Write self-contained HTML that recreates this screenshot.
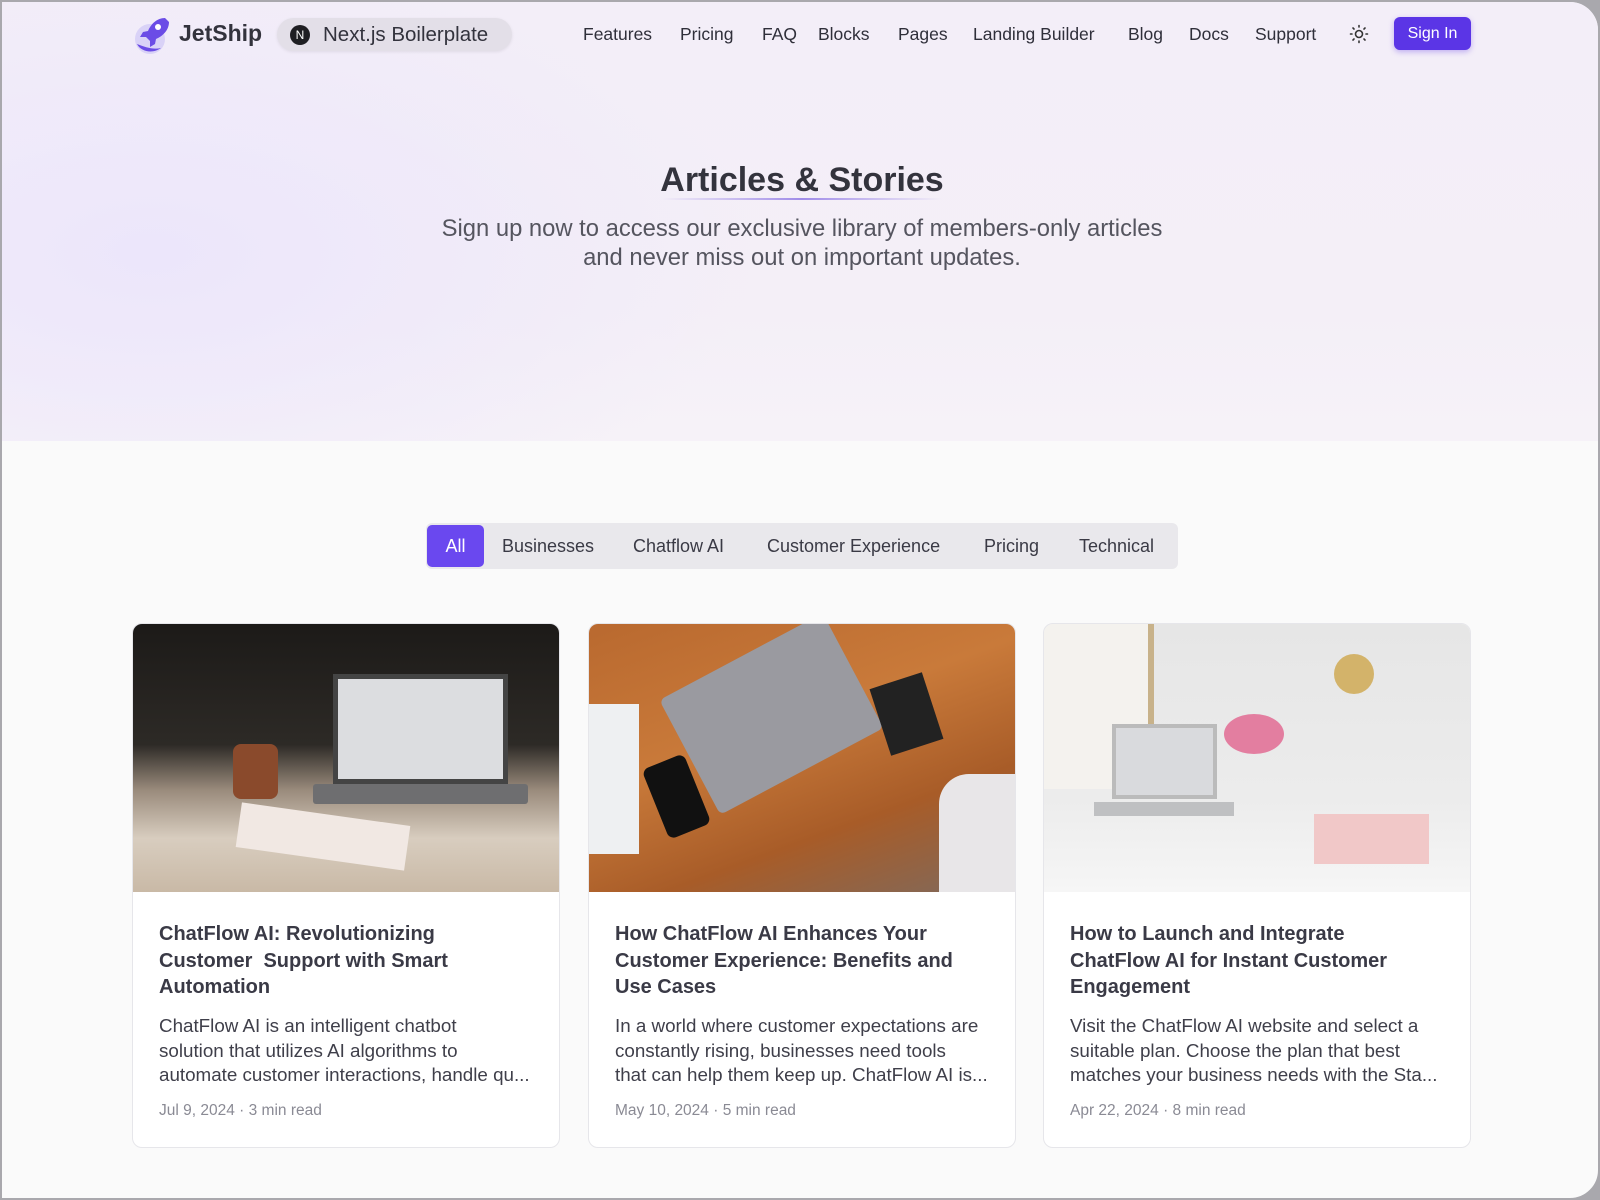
<!DOCTYPE html>
<html><head><meta charset="utf-8"><style>
*{box-sizing:border-box;margin:0;padding:0}
body{width:1600px;height:1200px;overflow:hidden;background:#a9a8ad;font-family:"Liberation Sans",sans-serif;color:#3a3a45}
.frame{position:absolute;left:0;top:0;width:1600px;height:1200px;border:2px solid #a9a8ad;border-radius:0 30px 30px 0;background:#fafafa;overflow:hidden}
.hero{position:absolute;left:0;top:0;width:1600px;height:439px;background:radial-gradient(ellipse 600px 300px at 150px 250px,#ece6fb 0%,rgba(236,230,251,0) 100%),linear-gradient(180deg,#f3eef8 0%,#f4eff7 70%,#f6f2f8 100%)}
.abs{position:absolute;white-space:nowrap}
.nav a{position:absolute;top:22px;font-size:17.5px;color:#2f2f3a}
.pill{left:275px;top:16px;width:235px;height:33px;border-radius:17px;background:#e3dfe8;box-shadow:0 1px 3px rgba(0,0,0,.08)}
.signin{left:1392px;top:15px;width:77px;height:33px;border-radius:6px;background:#5b35e6;color:#fff;font-size:16px;text-align:center;line-height:33px;box-shadow:0 2px 6px rgba(91,53,230,.35)}
.tabs{left:424px;top:521px;width:752px;height:46px;background:#e9e8ec;border-radius:6px}
.tab{position:absolute;top:13px;font-size:18px;color:#3a3a45}
.card{position:absolute;top:621px;width:428px;height:525px;background:#fff;border:1px solid #e6e6ea;border-radius:10px;overflow:hidden}
.img{height:268px;position:relative;overflow:hidden}
.ct{position:absolute;left:26px;top:297px;white-space:nowrap;font-size:20px;font-weight:bold;line-height:26.5px;color:#3a3a46}
.cd{position:absolute;left:26px;top:390px;white-space:nowrap;font-size:18.8px;line-height:24.5px;color:#3f3f4a}
.dt{position:absolute;left:26px;top:478px;font-size:15.5px;color:#8a8a94}
</style></head><body><div class="frame">
<div class="hero"></div>
<svg class="abs" style="left:129px;top:12px" width="42" height="42" viewBox="0 0 42 42"><circle cx="19" cy="25" r="15" fill="#d9d2f7"/><path d="M6 30c4 8 16 10 24 4-8 2-16-1-24-4z" fill="#6b4ce6"/><path d="M34 4c-8 0-14 6-17 13l-5 1-3 5 6 0 4 4 0 6 5-3 1-5c7-3 13-9 13-17z" fill="#6b4ce6"/><circle cx="27" cy="13" r="3" fill="#fff"/></svg>
<div class="abs" style="left:177px;top:18px;font-size:23px;font-weight:bold;color:#33333d">JetShip</div>
<div class="abs pill"></div>
<div class="abs" style="left:288px;top:23px;width:20px;height:20px;border-radius:50%;background:#1e1e22;color:#fff;font-size:12px;text-align:center;line-height:20px">N</div>
<div class="abs" style="left:321px;top:21px;font-size:20.5px;color:#33333d">Next.js Boilerplate</div>
<div class="nav"><a style="left:581px">Features</a><a style="left:678px">Pricing</a><a style="left:760px">FAQ</a><a style="left:816px">Blocks</a><a style="left:896px">Pages</a><a style="left:971px">Landing Builder</a><a style="left:1126px">Blog</a><a style="left:1187px">Docs</a><a style="left:1253px">Support</a></div>
<svg class="abs" style="left:1347px;top:22px" width="20" height="20" viewBox="0 0 20 20" fill="none" stroke="#333" stroke-width="1.6" stroke-linecap="round"><circle cx="10" cy="10" r="3.5"/><path d="M10 1.5v1.5M10 17v1.5M1.5 10h1.5M17 10h1.5M4 4l1 1M15 15l1 1M4 16l1-1M15 5l1-1"/></svg>
<div class="abs signin">Sign In</div>
<div class="abs" style="left:0;width:1600px;top:159px;text-align:center;font-size:34px;font-weight:bold;color:#33333d">Articles &amp; Stories</div>
<div class="abs" style="left:660px;top:196px;width:280px;height:2px;background:linear-gradient(90deg,rgba(139,110,230,0),#a08ce8,rgba(139,110,230,0))"></div>
<div class="abs" style="left:0;width:1600px;top:212px;text-align:center;font-size:23.8px;line-height:29px;color:#55555f">Sign up now to access our exclusive library of members-only articles<br>and never miss out on important updates.</div>
<div class="abs tabs">
<div class="abs" style="left:1px;top:2px;width:57px;height:42px;border-radius:5px;background:#6a48ef;color:#fff;font-size:18px;text-align:center;line-height:42px">All</div>
<span class="tab" style="left:76px">Businesses</span><span class="tab" style="left:207px">Chatflow AI</span><span class="tab" style="left:341px">Customer Experience</span><span class="tab" style="left:558px">Pricing</span><span class="tab" style="left:653px">Technical</span>
</div>
<div class="card" style="left:130px"><div class="img" style="background:linear-gradient(180deg,#1c1a18 0%,#2d2a26 45%,#9a8b7c 62%,#d8cdbf 80%,#c9b9a6 100%)">
<div class="abs" style="left:200px;top:50px;width:175px;height:110px;background:#dcdde0;border:5px solid #444"></div>
<div class="abs" style="left:180px;top:160px;width:215px;height:20px;background:#6e6e70;border-radius:3px"></div>
<div class="abs" style="left:105px;top:190px;width:170px;height:45px;background:#f1e8e3;transform:rotate(8deg)"></div>
<div class="abs" style="left:100px;top:120px;width:45px;height:55px;border-radius:8px;background:#8a4a2c"></div></div>
<div class="ct">ChatFlow AI: Revolutionizing<br>Customer&nbsp; Support with Smart<br>Automation</div>
<div class="cd">ChatFlow AI is an intelligent chatbot<br>solution that utilizes AI algorithms to<br>automate customer interactions, handle qu...</div>
<div class="dt">Jul 9, 2024 · 3 min read</div></div>
<div class="card" style="left:586px"><div class="img" style="background:linear-gradient(160deg,#b9692f 0%,#c97a3a 40%,#a85c28 70%,#7e6a5e 100%)">
<div class="abs" style="left:90px;top:25px;width:185px;height:130px;background:#9a9aa0;transform:rotate(-28deg);border-radius:6px"></div>
<div class="abs" style="left:65px;top:135px;width:45px;height:75px;background:#111;border-radius:7px;transform:rotate(-22deg)"></div>
<div class="abs" style="left:0;top:80px;width:50px;height:150px;background:#eef0f2"></div>
<div class="abs" style="left:290px;top:55px;width:55px;height:70px;background:#222;transform:rotate(-18deg)"></div>
<div class="abs" style="left:350px;top:150px;width:78px;height:118px;background:#e8e6e8;border-radius:30px 0 0 0"></div></div>
<div class="ct">How ChatFlow AI Enhances Your<br>Customer Experience: Benefits and<br>Use Cases</div>
<div class="cd">In a world where customer expectations are<br>constantly rising, businesses need tools<br>that can help them keep up. ChatFlow AI is...</div>
<div class="dt">May 10, 2024 · 5 min read</div></div>
<div class="card" style="left:1041px"><div class="img" style="background:linear-gradient(180deg,#e6e6e6 0%,#ececec 65%,#f6f6f6 100%)">
<div class="abs" style="left:0;top:0;width:110px;height:165px;background:#f4f2ee;border-right:6px solid #c8b28a"></div>
<div class="abs" style="left:68px;top:100px;width:105px;height:75px;background:#d9dadd;border:4px solid #bbb"></div>
<div class="abs" style="left:50px;top:178px;width:140px;height:14px;background:#bfc0c2"></div>
<div class="abs" style="left:180px;top:90px;width:60px;height:40px;border-radius:50%;background:#e37ea0"></div>
<div class="abs" style="left:270px;top:190px;width:115px;height:50px;background:#f1c8c8"></div>
<div class="abs" style="left:290px;top:30px;width:40px;height:40px;border-radius:50%;background:#d3b36a"></div></div>
<div class="ct">How to Launch and Integrate<br>ChatFlow AI for Instant Customer<br>Engagement</div>
<div class="cd">Visit the ChatFlow AI website and select a<br>suitable plan. Choose the plan that best<br>matches your business needs with the Sta...</div>
<div class="dt">Apr 22, 2024 · 8 min read</div></div>
</div></body></html>
